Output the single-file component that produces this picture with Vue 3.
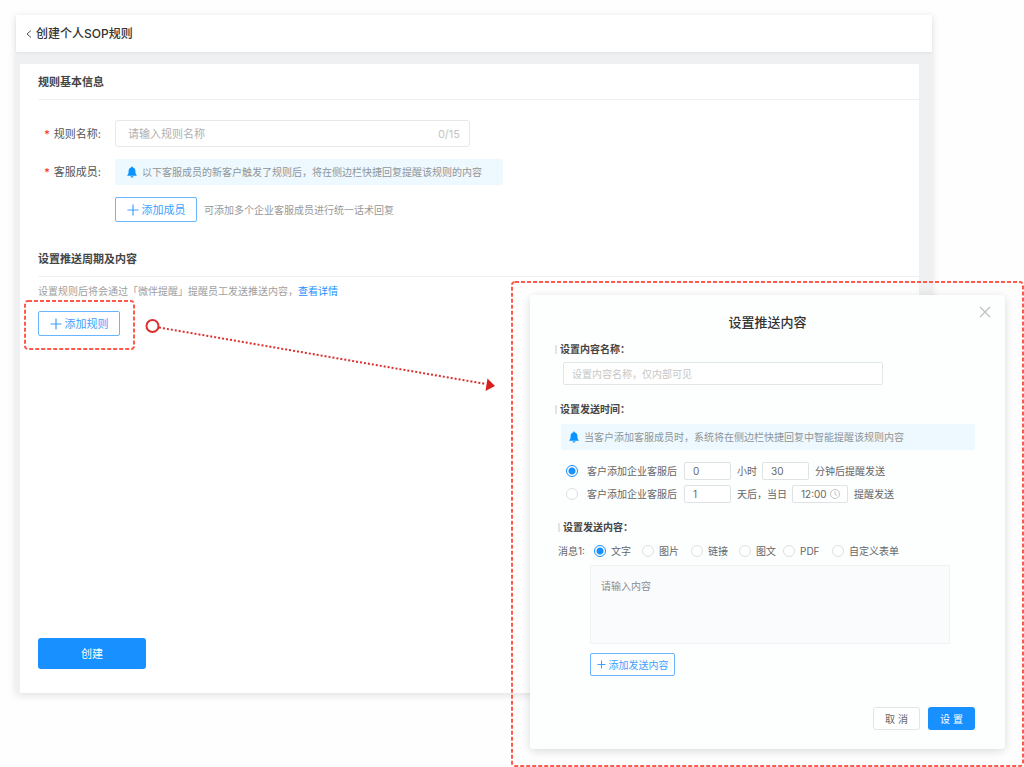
<script setup>
import { ref } from 'vue'

const ruleName = ref('')
const contentName = ref('')
const timing = ref('hours')
const hours = ref('0')
const minutes = ref('30')
const days = ref('1')
const clock = ref('12:00')
const message = ref('')
const messageType = ref('text')
const messageTypes = [
  { id: 'text', label: '文字' },
  { id: 'image', label: '图片' },
  { id: 'link', label: '链接' },
  { id: 'article', label: '图文' },
  { id: 'pdf', label: 'PDF' },
  { id: 'form', label: '自定义表单' }
]
</script>

<template>
  <div class="stage">
    <main class="window">
      <header class="topbar">
        <a href="#" class="back" aria-label="返回">
          <svg width="6" height="10" viewBox="0 0 6 10"><path d="M5 1.5 1 5l4 3.5" fill="none" stroke="#555" stroke-width="1" /></svg>
        </a>
        <h1>创建个人SOP规则</h1>
      </header>

      <div class="body">
        <section class="card">
          <h2>规则基本信息</h2>
          <div class="fields">
            <label class="label" for="rule-name"><span class="star">*</span>规则名称:</label>
            <div class="name-box">
              <input id="rule-name" v-model="ruleName" type="text" maxlength="15" placeholder="请输入规则名称" />
              <span class="count">{{ ruleName.length }}/15</span>
            </div>
            <span class="label"><span class="star">*</span>客服成员:</span>
            <p class="notice member-notice">
              <svg class="bell" width="10" height="12" viewBox="0 0 10 12"><path d="M5 .5c.6 0 .9.4.9.9C7.600 1.900 8.400 3.200 8.400 5c0 2.400.4 3.300 1.300 4v.7H.3V9c.9-.7 1.300-1.600 1.300-4 0-1.800.8-3.100 2.500-3.600 0-.5.300-.9.900-.9zM3.500 10.200h3c-.1.800-.7 1.300-1.500 1.300s-1.400-.5-1.500-1.300z" fill="#0a94ff" /></svg>
              <span>以下客服成员的新客户触发了规则后，将在侧边栏快捷回复提醒该规则的内容</span>
            </p>
            <div class="member-row">
              <button type="button" class="add">
                <svg width="12" height="12" viewBox="0 0 12 12"><path d="M6 .5v11M.5 6h11" stroke="#3d9fff" stroke-width="1.200" /></svg>
                添加成员
              </button>
              <span class="hint">可添加多个企业客服成员进行统一话术回复</span>
            </div>
          </div>

          <h2 class="second">设置推送周期及内容</h2>
          <p class="tip">设置规则后将会通过「微伴提醒」提醒员工发送推送内容，<a href="#">查看详情</a></p>
          <div class="rule-add">
            <button type="button" class="add">
              <svg width="12" height="12" viewBox="0 0 12 12"><path d="M6 .5v11M.5 6h11" stroke="#3d9fff" stroke-width="1.200" /></svg>
              添加规则
            </button>
            <svg class="marker" aria-hidden="true"><rect class="dash" x="1" y="1" rx="3" /></svg>
            <svg class="arrow" width="352" height="76" viewBox="0 0 352 76" aria-hidden="true">
              <circle cx="9.500" cy="9" r="6" fill="none" stroke="#dc2f2f" stroke-width="2" />
              <path d="M16 10.500 343 67" stroke="#dc2f2f" stroke-width="2" stroke-dasharray="2 2" />
              <path d="M344.500 61.500 352 69l-9.500 5z" fill="#d81e1e" />
            </svg>
          </div>
          <button type="button" class="primary create">创建</button>
        </section>
      </div>
    </main>

    <div class="callout">
      <svg class="outline" aria-hidden="true"><rect class="dash" x="1" y="1" rx="3" /></svg>
      <section class="dialog" role="dialog" aria-labelledby="dialog-title">
        <button type="button" class="close" aria-label="关闭">
          <svg width="12" height="12" viewBox="0 0 12 12"><path d="m1 1 10 10M11 1 1 11" stroke="#bfbfbf" stroke-width="1.200" /></svg>
        </button>
        <h2 id="dialog-title" class="dialog-title">设置推送内容</h2>

        <h3><label for="content-name">设置内容名称：</label></h3>
        <input id="content-name" v-model="contentName" class="content-name" type="text" placeholder="设置内容名称，仅内部可见" />

        <h3 class="spaced">设置发送时间：</h3>
        <p class="notice dialog-notice">
          <svg class="bell" width="10" height="12" viewBox="0 0 10 12"><path d="M5 .5c.6 0 .9.4.9.9C7.600 1.900 8.400 3.200 8.400 5c0 2.400.4 3.300 1.300 4v.7H.3V9c.9-.7 1.300-1.600 1.300-4 0-1.800.8-3.100 2.500-3.600 0-.5.300-.9.900-.9zM3.500 10.200h3c-.1.800-.7 1.300-1.500 1.300s-1.400-.5-1.500-1.300z" fill="#0a94ff" /></svg>
          <span>当客户添加客服成员时，系统将在侧边栏快捷回复中智能提醒该规则内容</span>
        </p>
        <div class="timings">
          <div class="timing">
            <input id="by-hours" v-model="timing" type="radio" name="timing" value="hours" />
            <label for="by-hours">客户添加企业客服后</label>
            <input v-model="hours" class="num" type="text" aria-label="小时" />
            <span>小时</span>
            <input v-model="minutes" class="num" type="text" aria-label="分钟" />
            <span>分钟后提醒发送</span>
          </div>
          <div class="timing">
            <input id="by-days" v-model="timing" type="radio" name="timing" value="days" />
            <label for="by-days">客户添加企业客服后</label>
            <input v-model="days" class="num" type="text" aria-label="天" />
            <span>天后，当日</span>
            <div class="time-box">
              <input v-model="clock" type="text" aria-label="时间" />
              <svg width="10" height="10" viewBox="0 0 10 10" fill="none" stroke="#b5b9b9" stroke-width=".8"><circle cx="5" cy="5" r="4.500" /><path d="M5 2.200V5.300l2 1.200" /></svg>
            </div>
            <span>提醒发送</span>
          </div>
        </div>

        <h3 class="spaced inset">设置发送内容：</h3>
        <div class="message-head">
          <span>消息1:</span>
          <div class="types">
            <label v-for="type in messageTypes" :key="type.id">
              <input v-model="messageType" type="radio" name="message-type" :value="type.id" />
              {{ type.label }}
            </label>
          </div>
        </div>
        <textarea v-model="message" aria-label="消息内容" placeholder="请输入内容"></textarea>
        <button type="button" class="add add-content">
          <svg width="9" height="9" viewBox="0 0 9 9"><path d="M4.500 .5v8M.5 4.500h8" stroke="#3d9fff" /></svg>
          添加发送内容
        </button>
        <footer>
          <button type="button" class="cancel">取 消</button>
          <button type="button" class="primary confirm">设 置</button>
        </footer>
      </section>
    </div>
  </div>
</template>

<style>
body {
  margin: 0;
  background: #fefefe;
}
</style>

<style scoped>
* {
  box-sizing: border-box;
}

.stage {
  position: relative;
  min-height: 100vh;
  padding: 15px 92px 74px 16px;
  display: flex;
  flex-direction: column;
  overflow: hidden;
  font-family: Inter, "Noto Sans CJK SC", sans-serif;
  font-size: 10px;
  line-height: 14px;
  color: #666;
}

h1, h2, h3, p {
  margin: 0;
}

svg {
  flex: none;
}

input, textarea, button {
  font: inherit;
  color: inherit;
  margin: 0;
  padding: 0;
  outline: none;
}

button {
  cursor: pointer;
}

.window {
  flex: 1;
  display: flex;
  flex-direction: column;
  background: #eff0f2;
  box-shadow: 0 2px 8px rgba(0, 0, 0, 0.12);
}

.topbar {
  display: flex;
  align-items: center;
  gap: 4px;
  height: 37px;
  padding-left: 10px;
  background: #fff;
  box-shadow: 0 1px 3px rgba(0, 0, 0, 0.06);
}

.back {
  display: flex;
}

h1 {
  font-size: 12px;
  line-height: 18px;
  font-weight: 500;
  color: #333;
}

.body {
  flex: 1;
  display: flex;
  padding: 12px 13px 0 4px;
}

.card {
  flex: 1;
  display: flex;
  flex-direction: column;
  align-items: flex-start;
  padding: 0 0 24px 18px;
  background: #fff;
}

.card h2 {
  align-self: stretch;
  height: 36px;
  border-bottom: 1px solid #eff0f2;
  font-size: 11px;
  line-height: 36px;
  font-weight: 700;
  color: #444;
}

.fields {
  display: grid;
  grid-template-columns: 63px auto;
  column-gap: 14px;
  row-gap: 12px;
  align-items: center;
  margin-top: 20px;
}

.label {
  text-align: right;
  font-size: 11px;
  color: #555;
}

.star {
  margin-right: 4px;
  color: #f5222d;
}

.name-box {
  display: flex;
  align-items: center;
  width: 355px;
  height: 27px;
  padding: 0 9px 0 12px;
  border: 1px solid #e6e8eb;
  border-radius: 3px;
  font-size: 11px;
}

.name-box input {
  flex: 1;
  min-width: 0;
  border: 0;
  background: none;
}

input::placeholder {
  color: #b0b0b0;
  opacity: 1;
}

.count {
  color: #c4c4c4;
}

.notice {
  display: flex;
  align-items: center;
  gap: 5px;
  background: #eef9ff;
  border-radius: 2px;
  color: #8f9599;
}

.member-notice {
  width: 388px;
  height: 26px;
  padding-left: 12px;
}

.member-row {
  grid-column: 2;
  display: flex;
  align-items: center;
  gap: 7px;
}

.add {
  display: flex;
  align-items: center;
  justify-content: center;
  gap: 3px;
  width: 82px;
  height: 25px;
  border: 1px solid #69b5ff;
  border-radius: 2px;
  background: #fff;
  font-size: 11px;
  color: #3d9fff;
}

.hint {
  color: #999;
}

.card .second {
  margin-top: 19px;
}

.tip {
  margin-top: 7px;
  color: #a0a0a0;
}

a {
  color: #1890ff;
  text-decoration: none;
}

.rule-add {
  position: relative;
  margin-top: 13px;
}

.marker {
  position: absolute;
  left: -14px;
  top: -11px;
  width: 111px;
  height: 50px;
  pointer-events: none;
}

.dash {
  width: calc(100% - 2px);
  height: calc(100% - 2px);
  fill: none;
  stroke: #ff5b4d;
  stroke-width: 2px;
  stroke-dasharray: 4 2;
}

.arrow {
  position: absolute;
  left: 105px;
  top: 6px;
}

.primary {
  border: 0;
  border-radius: 3px;
  background: #1890ff;
  color: #fff;
}

.create {
  width: 108px;
  height: 31px;
  margin-top: auto;
  font-size: 11px;
}

.callout {
  position: absolute;
  top: 281px;
  left: calc(50% - 1px);
  right: 0;
  padding: 14px 19px 18px;
}

.outline {
  position: absolute;
  inset: 0;
  width: 100%;
  height: 100%;
  pointer-events: none;
}

.dialog {
  position: relative;
  display: flex;
  flex-direction: column;
  padding: 17px 30px 19px 25px;
  border-radius: 4px;
  background: #fdfefe;
  box-shadow: 0 2px 10px rgba(0, 0, 0, 0.15);
}

.close {
  position: absolute;
  top: 11px;
  right: 14px;
  display: flex;
  border: 0;
  background: none;
}

.dialog-title {
  margin: 0 0 10px 5px;
  text-align: center;
  font-size: 13px;
  line-height: 20px;
  font-weight: 500;
  color: #333;
}

h3 {
  display: flex;
  align-items: center;
  gap: 3px;
  font-size: 10px;
  line-height: 14px;
  font-weight: 700;
  color: #444;
}

h3::before {
  content: "";
  width: 2px;
  height: 9px;
  background: #dfe6ea;
}

.spaced {
  margin-top: 17px;
}

.inset {
  margin-left: 3px;
}

.content-name {
  width: 320px;
  height: 23px;
  margin: 6px 0 0 8px;
  padding: 0 8px;
  border: 1px solid #e2e6e6;
  border-radius: 2px;
  background: #fff;
}

.content-name::placeholder {
  color: #c4c8c8;
}

.dialog-notice {
  height: 26px;
  margin: 8px 0 0 6px;
  padding-left: 8px;
}

.timings {
  display: flex;
  flex-direction: column;
  gap: 4px;
  margin: 11px 0 0 11px;
}

.timing {
  display: flex;
  align-items: center;
  gap: 6px;
  height: 19px;
}

input[type="radio"] {
  appearance: none;
  flex: none;
  width: 12px;
  height: 12px;
  border: 1px solid #dcdfe0;
  border-radius: 50%;
  background: #fff;
}

input[type="radio"]:checked {
  border-color: #1890ff;
  background: radial-gradient(circle, #1890ff 3px, #fff 4px);
}

.timing input[type="radio"] {
  margin-right: 3px;
}

.timing label {
  margin-right: 1px;
}

.num, .time-box {
  width: 47px;
  height: 18px;
  padding: 0 8px;
  border: 1px solid #dfe3e3;
  border-radius: 2px;
  background: #fff;
}

.timing .num + span {
  margin-right: -1px;
}

.time-box {
  display: flex;
  align-items: center;
  width: 56px;
  padding-right: 7px;
}

.time-box input {
  flex: 1;
  min-width: 0;
  border: 0;
  background: none;
}

.message-head {
  display: flex;
  gap: 6px;
  margin: 10px 0 0 3px;
}

.message-head > span {
  width: 30px;
}

.types {
  display: grid;
  grid-template-columns: 48px 49px 48px 44px 49px auto;
}

.types label {
  display: flex;
  align-items: center;
  gap: 5px;
  white-space: nowrap;
}

textarea {
  height: 79px;
  margin: 7px 25px 0 35px;
  padding: 13px 10px;
  border: 1px solid #eff1f3;
  background: #fafbfd;
  resize: none;
}

textarea::placeholder {
  color: #8c8c8c;
}

.add-content {
  width: 85px;
  height: 23px;
  margin: 9px 0 0 35px;
  font-size: 10px;
}

footer {
  display: flex;
  justify-content: flex-end;
  gap: 8px;
  margin-top: 31px;
}

.cancel, .confirm {
  width: 47px;
  height: 23px;
  font-size: 10px;
}

.cancel {
  border: 1px solid #e2e5e5;
  border-radius: 3px;
  background: #fff;
}
</style>
